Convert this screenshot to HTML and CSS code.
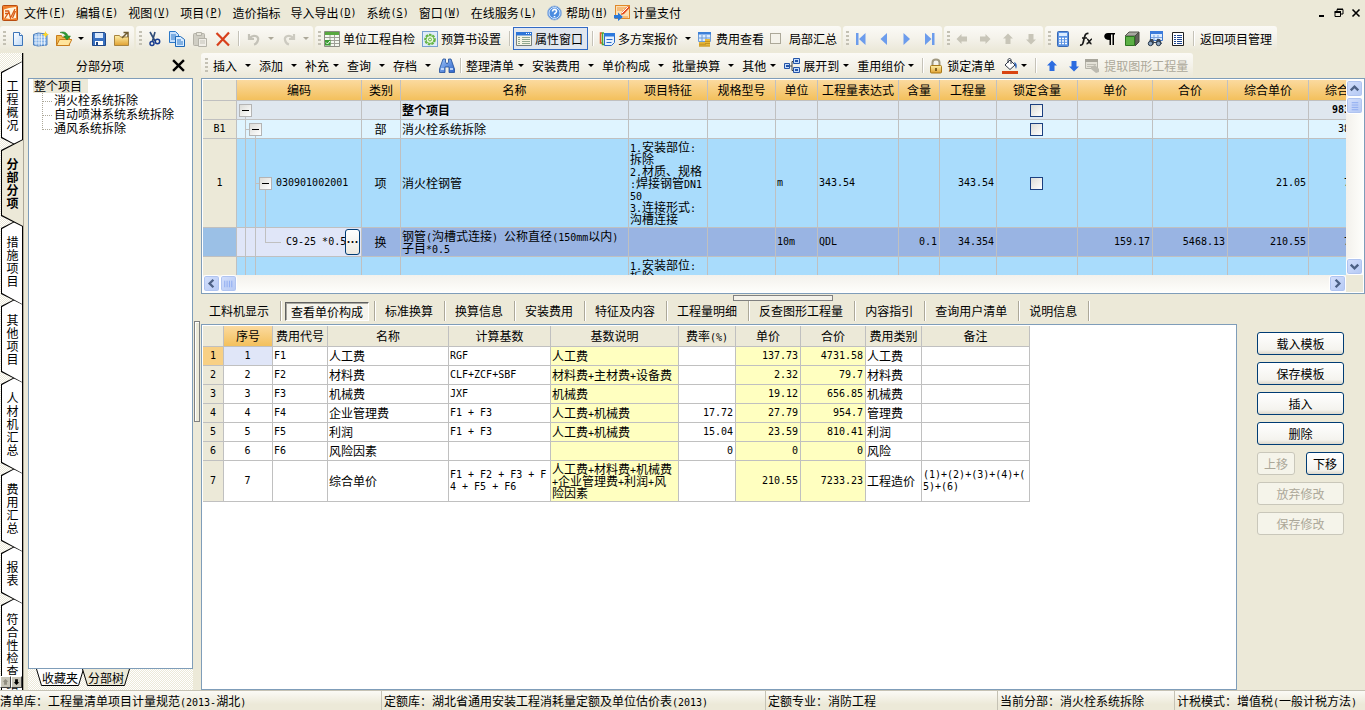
FILE: index.html
```
<!DOCTYPE html>
<html lang="zh-CN">
<head>
<meta charset="utf-8">
<title>分部分项 - 工程计价</title>
<link rel="stylesheet" href="styles.css">
</head>
<body>
<svg class="defs" aria-hidden="true">
  <defs>
    <linearGradient id="blue" x1="0" y1="0" x2="1" y2="1"><stop offset="0" stop-color="#9cc4f8"/><stop offset="1" stop-color="#2c62c8"/></linearGradient>
    <linearGradient id="page" x1="0" y1="0" x2="1" y2="1"><stop offset="0" stop-color="#fff"/><stop offset="1" stop-color="#bcd8f8"/></linearGradient>
    <linearGradient id="gold" x1="0" y1="0" x2="0" y2="1"><stop offset="0" stop-color="#fff0a8"/><stop offset="1" stop-color="#e0a030"/></linearGradient>
    <symbol id="arrow" viewBox="0 0 16 16"><path d="M8 2.500 13 7.500H10.500V13H5.500V7.500H3z"/></symbol>
  </defs>
</svg>

<header class="menubar">
  <nav class="menu">
    <svg class="ic app" viewBox="0 0 16 16"><rect x=".5" y=".5" width="15" height="15" rx="1" fill="#f0802c" stroke="#b84c10"/><path d="M2 4.500 7 3l7-1v11l-6 1-6-1z" fill="#fff4dc"/><path d="M3 6h4M3 8.500h3M3 13l4-6 1.500 6L13 4M10.500 13l3-7" stroke="#d85a14" stroke-width="1.300" fill="none"/></svg>
    <a href="#">文件<span class="n">(<u>F</u>)</span></a>
    <a href="#">编辑<span class="n">(<u>E</u>)</span></a>
    <a href="#">视图<span class="n">(<u>V</u>)</span></a>
    <a href="#">项目<span class="n">(<u>P</u>)</span></a>
    <a href="#">造价指标</a>
    <a href="#">导入导出<span class="n">(<u>D</u>)</span></a>
    <a href="#">系统<span class="n">(<u>S</u>)</span></a>
    <a href="#">窗口<span class="n">(<u>W</u>)</span></a>
    <a href="#">在线服务<span class="n">(<u>L</u>)</span></a>
    <a href="#"><svg class="ic" viewBox="0 0 16 16"><circle cx="7.500" cy="8" r="7" fill="#4c8ce0" stroke="#a0b8d8"/><circle cx="7.500" cy="8" r="5.500" fill="none" stroke="#d8e8fc"/><path d="M5.500 6.500C5.500 3.500 9.800 3.800 9.500 6.500 9.300 8 7.500 8 7.500 9.500M7.500 11v1.300" stroke="#fff" stroke-width="1.600" fill="none"/></svg>帮助<span class="n">(<u>H</u>)</span></a>
    <a href="#" class="pay"><svg class="ic" viewBox="0 0 16 16"><rect x="1.500" y=".5" width="14" height="13" fill="#fbe0b4" stroke="#e08828"/><path d="M3 3h9M3 5h6M9 12h5" stroke="#f09840"/><path d="m7 10 1-3 6-6 2 1.500-6 6.500z" fill="#e44c20"/><path d="m8 8 6-6" stroke="#fff"/><path d="M0 10h4V7.500L9 12l-5 4v-2.500H0z" fill="#2878d8"/></svg>计量支付</a>
  </nav>
  <div class="winctl">
    <button aria-label="最小化"><svg viewBox="0 0 10 10"><path d="M2 8h5" stroke="#000" stroke-width="2"/></svg></button>
    <button aria-label="还原"><svg viewBox="0 0 10 10"><path d="M3 3V1.500h6V6H7M3 1h6" stroke="#000" fill="none"/><path d="M1 4.500h5.500v4H1z" stroke="#000" fill="none"/><path d="M.5 4h6.500" stroke="#000" stroke-width="2"/></svg></button>
    <button aria-label="关闭"><svg viewBox="0 0 10 10"><path d="m1.500 1.500 7 7m0-7-7 7" stroke="#000" stroke-width="1.600"/></svg></button>
  </div>
</header>

<div class="toolbar first" role="toolbar" aria-label="标准">
  <div class="group">
    <i class="grip"></i>
    <button class="tb" aria-label="新建"><svg class="ic" viewBox="0 0 16 16"><path d="M3.500 1.500h6l3 3v10h-9z" fill="url(#page)" stroke="#3c74b8"/><path d="M9.500 1.500v3h3" fill="#fff" stroke="#3c74b8"/></svg></button>
    <button class="tb" aria-label="新建单位工程"><svg class="ic" viewBox="0 0 16 16"><path d="M.5 3.500 5 2l9 1v11l-9 1-4.500-1z" fill="#88b4e8" stroke="#5080bc"/><path d="M3 3v11.500M6 2.500V15M8.500 3v11.500M11.500 3v11.500M1 6h12M1 9h12M1 12h12" stroke="#fff" stroke-width=".7"/><path d="m12.500 0 1 2.500L16 3.500l-2.500 1-1 2.500-1-2.500L9 3.500l2.500-1z" fill="#ffd828"/></svg></button>
    <button class="tb" aria-label="打开"><svg class="ic" viewBox="0 0 16 16"><path d="M.5 14.500v-10h5l1 2h7v8z" fill="#f0b850" stroke="#c87c1c"/><path d="m.5 14.500 3-6h12.300l-3 6z" fill="#ffe49c" stroke="#c87c1c"/><path d="M4 1.500c4-1.500 7 0 8 3.500h2.500L11 9 7.500 5H10c-1-2-3-3-6-3.500z" fill="#2c9c30" stroke="#1c7420" stroke-width=".5"/></svg></button>
    <i class="caret"></i>
    <button class="tb" aria-label="保存"><svg class="ic" viewBox="0 0 16 16"><path d="M1.500 1.500h12l1 1v12h-13z" fill="#3870c0" stroke="#204888"/><path d="M4 2h8v5H4z" fill="#dceafc"/><path d="M4 10h8v4H4z" fill="#fff"/><path d="M5 11h2v3H5z" fill="#204888"/></svg></button>
    <button class="tb" aria-label="另存"><svg class="ic" viewBox="0 0 16 16"><path d="M.5 14.500v-10h5l1 1.500h8v8.500z" fill="url(#gold)" stroke="#a88440"/><path d="m8 7 5-5M9.500 1.500H14V6" stroke="#705c30" stroke-width="1.500" fill="none"/></svg></button>
  </div>
  <div class="group">
    <i class="grip"></i>
    <button class="tb" aria-label="剪切"><svg class="ic" viewBox="0 0 16 16"><path d="m4 1 5 9M9 1 6.500 10" stroke="#304c78" stroke-width="1.600"/><circle cx="6" cy="12.500" r="2" fill="none" stroke="#183c90" stroke-width="1.500"/><circle cx="11.500" cy="10.500" r="2.200" fill="none" stroke="#183c90" stroke-width="1.500"/></svg></button>
    <button class="tb" aria-label="复制"><svg class="ic" viewBox="0 0 16 16"><path d="M.5.5h6l3 3v8h-9z" fill="#c8e0fc" stroke="#2c78c8"/><path d="M2 4h5M2 6h5M2 8h5" stroke="#2c78c8"/><path d="M6.500 5.500h5l4 3v7h-9z" fill="#d8ebff" stroke="#1c68b8"/><path d="M8 9h4M8 11h6M8 13h6" stroke="#2c78c8"/></svg></button>
    <button class="tb" aria-label="粘贴" disabled><svg class="ic" viewBox="0 0 16 16"><rect x="1.500" y="2.500" width="11" height="12" rx="1" fill="#d0cec4" stroke="#b4b2a8"/><path d="M4.500 1.500h5v3h-5z" fill="#e8e6dc" stroke="#b4b2a8"/><path d="M6.500 7.500h8v8h-8z" fill="#f0eee8" stroke="#b4b2a8"/><path d="M8 10h5M8 12h5" stroke="#c4c2b8"/></svg></button>
    <button class="tb" aria-label="删除"><svg class="ic" viewBox="0 0 16 16"><path d="M1.500 2 14 14.500M14 1.500 2 14.500" stroke="#d8401c" stroke-width="2.200"/></svg></button>
    <i class="sep"></i>
    <button class="tb" aria-label="撤销" disabled><svg class="ic" viewBox="0 0 16 16"><path d="M3 3v5h5M4 7C7 3 13 5 12 9c-.5 2.500-2 4-4 4.500" stroke="#c4c2b8" stroke-width="2.200" fill="none"/></svg></button>
    <i class="caret off"></i>
    <button class="tb" aria-label="重做" disabled><svg class="ic" viewBox="0 0 16 16"><path d="M13 3v5H8M12 7C9 3 3 5 4 9c.5 2.500 2 4 4 4.500" stroke="#cccac0" stroke-width="2.200" fill="none"/></svg></button>
    <i class="caret off"></i>
  </div>
  <div class="group">
    <i class="grip"></i>
    <button class="tx"><svg class="ic" viewBox="0 0 16 16"><path d="M.5.5h15v15H.5z" fill="#f4f8f0" stroke="#8c8c84"/><path d="M1 1h14v3H1z" fill="#58a840"/><path d="M1 6.500h14M1 9.500h14M1 12.500h14M6 4v11M10.500 4v11" stroke="#a0a098"/><path d="M1 9h5.500v5.500H1z" fill="#3c9c34"/><path d="m2 11.500 1.500 1.500L6 10" stroke="#fff" fill="none"/></svg>单位工程自检</button>
    <button class="tx"><svg class="ic" viewBox="0 0 16 16"><rect x=".5" y=".5" width="15" height="15" fill="#e0ecfa" stroke="#78a0d0"/><circle cx="8" cy="8.500" r="4.800" fill="none" stroke="#64b440" stroke-width="2" stroke-dasharray="2.500 1"/><circle cx="8" cy="8.500" r="4" fill="#e8f8e0" stroke="#64b440"/><circle cx="8" cy="8.500" r="1.500" fill="none" stroke="#64b440"/></svg>预算书设置</button>
    <i class="sep"></i>
    <button class="tx on"><svg class="ic" viewBox="0 0 16 16"><path d="M.5 1.500h15v13H.5z" fill="#f6f4e4" stroke="#78807c"/><path d="M0 1h16v3.500H0z" fill="#2c74d8"/><path d="M10 2.500h5" stroke="#fff" stroke-dasharray="1 1"/><path d="M2 6.500h2M6 6.500h8M2 8.500h2M6 8.500h8M2 10.500h2M6 10.500h8M2 12.500h2M6 12.500h8" stroke="#90a890"/></svg>属性窗口</button>
    <i class="sep"></i>
    <button class="tx"><svg class="ic" viewBox="0 0 16 16"><path d="M3 2H1.500v10H3" fill="none" stroke="#e05c28" stroke-width="1.500"/><path d="M5 2H3.500v11.500H5" fill="none" stroke="#48a838" stroke-width="1.500"/><path d="M5.500 2.500h10v9l-3 3h-7z" fill="#e4f0ff" stroke="#2c6cc8"/><path d="M5 2h11v3.500H5z" fill="#2c78dc"/><path d="M7.500 8.500h6M7.500 11.500h5" stroke="#2c6cc8"/></svg>多方案报价</button>
    <i class="caret"></i>
    <button class="tx"><svg class="ic" viewBox="0 0 16 16"><path d="M1.500 1.500h12v9h-12z" fill="#dcecff" stroke="#6c9cd8"/><path d="M1 1h13v2.500H1z" fill="#3c80d8"/><path d="M5 4v7M9 4v7M2 7h11" stroke="#6c9cd8"/><path d="M2 11h7v4.500H2zM8 8h5v7.500H8z" fill="#e8b83c"/><path d="M2 13.200h7M8 10.500h5M8 12.500h5M2 15h11" stroke="#b88818" stroke-width=".8"/></svg>费用查看</button>
    <label class="chk"><input type="checkbox">局部汇总</label>
  </div>
  <div class="group">
    <i class="grip"></i>
    <button class="tb" aria-label="首个"><svg class="ic" viewBox="0 0 16 16"><path d="M3 2h2.500v12H3zM12.500 2v12L6 8z" fill="#6c9cec"/></svg></button>
    <button class="tb" aria-label="上一个"><svg class="ic" viewBox="0 0 16 16"><path d="M11 2v12L4.500 8z" fill="#6c9cec"/></svg></button>
    <button class="tb" aria-label="下一个"><svg class="ic" viewBox="0 0 16 16"><path d="M4.500 2v12L11 8z" fill="#6c9cec"/></svg></button>
    <button class="tb" aria-label="末个"><svg class="ic" viewBox="0 0 16 16"><path d="M10 2h2.500v12H10zM3 2v12l6.500-6z" fill="#6c9cec"/></svg></button>
  </div>
  <div class="group">
    <i class="grip"></i>
    <button class="tb left off" aria-label="左移" disabled><svg class="ic"><use href="#arrow"/></svg></button>
    <button class="tb right off" aria-label="右移" disabled><svg class="ic"><use href="#arrow"/></svg></button>
    <button class="tb off" aria-label="上移行" disabled><svg class="ic"><use href="#arrow"/></svg></button>
    <button class="tb down off" aria-label="下移行" disabled><svg class="ic"><use href="#arrow"/></svg></button>
  </div>
  <div class="group">
    <i class="grip"></i>
    <button class="tb" aria-label="计算器"><svg class="ic" viewBox="0 0 16 16"><rect x="2.500" y=".5" width="11" height="15" rx="1" fill="#5c94e4" stroke="#3868b4"/><path d="M4 2h8v3H4z" fill="#dcecff"/><path d="M4 7.500h8M4 10h8M4 12.500h8" stroke="#fff" stroke-width="1.500" stroke-dasharray="2 1"/></svg></button>
    <button class="tb" aria-label="函数"><svg class="ic" viewBox="0 0 16 16"><path d="M2 14c3 .5 3-2 4-6s1.500-6 4.500-5.500M4 7h5M9 8c2 0 2 5 4.500 4.500M14 8c-2 0-3 5-5.500 4.500" stroke="#181818" stroke-width="1.700" fill="none"/></svg></button>
    <button class="tb" aria-label="段落标记"><svg class="ic" viewBox="0 0 16 16"><path d="M7 2h7v1.500h-1V14h-1.500V3.500H10V14H8.500V9C1.500 9 2 2 7 2z"/></svg></button>
    <button class="tb" aria-label="图形"><svg class="ic" viewBox="0 0 16 16"><path d="m1 5 4-4h10l-4 4z" fill="#a8a8a0" stroke="#585850"/><path d="m11 5 4-4v10l-4 4z" fill="#606058" stroke="#484840"/><path d="M1.500 5.500h9v9h-9z" fill="#5cb044" stroke="#2c7420"/></svg></button>
    <button class="tb" aria-label="查找表"><svg class="ic" viewBox="0 0 16 16"><path d="M3.500.5h12v9h-12z" fill="#dcecff" stroke="#3c78d0"/><path d="M3 0h13v3H3z" fill="#3c7cdc"/><path d="M7 4v6M11 4v6M4 6.500h11" stroke="#7ca4e0"/><path d="m3 8 3 0 1 3h2l1-3h3l2 5h-5l-1-1H7l-1 2H1z" fill="#3c4858"/><circle cx="3.500" cy="12.500" r="2.200" fill="#90a8c4" stroke="#283848"/><circle cx="11.500" cy="12.500" r="2.200" fill="#90a8c4" stroke="#283848"/></svg></button>
    <button class="tb" aria-label="清单"><svg class="ic" viewBox="0 0 16 16"><path d="M2.500 1.500h11v13h-11z" fill="#fff" stroke="#202020"/><path d="M4 4.500h2M7 4.500h5M4 6.500h2M7 6.500h5M4 8.500h2M7 8.500h5M4 10.500h2M7 10.500h5M4 12.500h2M7 12.500h5" stroke="#204890"/></svg></button>
    <i class="sep"></i>
    <button class="tx">返回项目管理</button>
  </div>
</div>

<div class="work">
  <div class="rail" role="tablist" aria-label="页面">
    <button class="rt" role="tab"><span>工程概况</span></button>
    <button class="rt cur" role="tab" aria-selected="true"><span>分部分项</span></button>
    <button class="rt z6" role="tab"><span>措施项目</span></button>
    <button class="rt z5" role="tab"><span>其他项目</span></button>
    <button class="rt z4" role="tab"><span>人材机汇总</span></button>
    <button class="rt z3" role="tab"><span>费用汇总</span></button>
    <button class="rt z2" role="tab"><span>报表</span></button>
    <button class="rt z1" role="tab"><span>符合性检查结果</span></button>
    <div class="railscroll">
      <button aria-label="向上滚动" disabled><svg viewBox="0 0 16 16"><use href="#arrow"/></svg></button>
      <button aria-label="向下滚动"><svg class="flip" viewBox="0 0 16 16"><use href="#arrow"/></svg></button>
    </div>
  </div>

  <aside class="side">
    <div class="sidehead"><h2>分部分项</h2><button aria-label="关闭面板"><svg viewBox="0 0 12 12"><path d="m1 1 10 10M11 1 1 11" stroke="#000" stroke-width="2.200"/></svg></button></div>
    <ul class="tree">
      <li><span class="sel">整个项目</span>
        <ul><li>消火栓系统拆除</li><li>自动喷淋系统系统拆除</li><li>通风系统拆除</li></ul>
      </li>
    </ul>
    <div class="sidetabs">
      <button><svg viewBox="0 0 48 17" preserveAspectRatio="none"><path d="m.5 0 5 16.500h37L47.500 0" fill="#fff" stroke="#000"/></svg><span>收藏夹</span></button>
      <button><svg viewBox="0 0 48 17" preserveAspectRatio="none"><path d="m.5 0 5 16.500h37L47.500 0" fill="#ece9d8" stroke="#000"/></svg><span>分部树</span></button>
    </div>
  </aside>

  <div class="vsplit"><i></i></div>

  <main class="content">
    <div class="toolbar second" role="toolbar" aria-label="清单">
      <div class="group">
        <i class="grip"></i>
        <button class="tx">插入</button><i class="caret split"></i>
        <button class="tx">添加</button><i class="caret split"></i>
        <button class="tx">补充</button><i class="caret near"></i>
        <button class="tx">查询</button><i class="caret split"></i>
        <button class="tx">存档</button><i class="caret split"></i>
        <button class="tx" aria-label="查找"><svg class="ic" viewBox="0 0 16 16"><path d="M4 1h2.500v3L8 6l1.500-2V1H12l3.500 10v3.500h-5.500V9H6v5.500H.5V11z" fill="url(#blue)" stroke="#204c98" stroke-width=".8"/><path d="M2 11h3M11 11h3" stroke="#dcecff" stroke-width="1.500"/></svg></button>
        <i class="sep"></i>
        <button class="tx">整理清单</button><i class="caret near"></i>
        <button class="tx">安装费用</button><i class="caret split"></i>
        <button class="tx">单价构成</button><i class="caret split"></i>
        <button class="tx">批量换算</button><i class="caret split"></i>
        <button class="tx">其他</button><i class="caret near"></i>
        <button class="tx"><svg class="ic" viewBox="0 0 16 16"><path d="M5 8h3M8 3.500v9M8 3.500h2M8 12.500h2" stroke="#404040" fill="none"/><path d="M.5 5.500h5v5h-5zM9.500.5h6v5h-6zM9.500 9.500h6v5h-6z" fill="#c4dcfc" stroke="#2454a8"/><path d="M2 8h3M11 3h3M11 12h3" stroke="#2454a8" stroke-width="2"/></svg>展开到</button><i class="caret near"></i>
        <button class="tx">重用组价</button><i class="caret"></i>
        <i class="sep"></i>
        <button class="tx"><svg class="ic" viewBox="0 0 16 16"><path d="M4.500 8V4.500c0-4 7-4 7 0V8" stroke="#a09880" stroke-width="2" fill="none"/><rect x="2.500" y="7.500" width="11" height="7.500" rx="1" fill="url(#gold)" stroke="#a87818"/><path d="M8 10v3" stroke="#604008" stroke-width="1.500"/></svg>锁定清单</button>
        <button class="tx fill" aria-label="填充颜色"><svg class="ic" viewBox="0 0 16 16"><path d="m3 7 5-5 5 5-5 4.500z" fill="#fff" stroke="#303848"/><path d="M6 5V2c0-2 3-2 3 0v4" stroke="#303848" fill="none"/><path d="M12 4c3 1 3.500 4 2 7-1-2-1-4-2-7z" fill="#3468b8"/><path d="M0 13h16v3H0z" fill="#d84410"/></svg></button><i class="caret"></i>
        <i class="sep"></i>
        <button class="tb blue" aria-label="上移"><svg class="ic"><use href="#arrow"/></svg></button>
        <button class="tb down blue" aria-label="下移"><svg class="ic"><use href="#arrow"/></svg></button>
        <button class="tx" disabled><svg class="ic" viewBox="0 0 16 16"><path d="M.5 1.500h12v9H.5z" fill="#e4e2d8" stroke="#b4b2a8"/><path d="M0 1h13v3H0z" fill="#a8a69c"/><path d="M2 6.500h9M2 8.500h6" stroke="#c0beb4"/><path d="m6 9 4-2 4 4v3l-3 1-5-4z" fill="#bcbab0"/></svg>提取图形工程量</button>
      </div>
    </div>

    <section class="frame upper">
      <div class="view">
        <table class="grid main">
          <colgroup><col class="w34"><col class="w125"><col class="w39"><col class="w228"><col class="w79"><col class="w68"><col class="w42"><col class="w81"><col class="w41"><col class="w57"><col class="w81"><col class="w75"><col class="w75"><col class="w81"><col class="w44"></colgroup>
          <thead><tr><th class="rh"></th><th>编码</th><th>类别</th><th>名称</th><th>项目特征</th><th>规格型号</th><th>单位</th><th>工程量表达式</th><th>含量</th><th>工程量</th><th>锁定含量</th><th>单价</th><th>合价</th><th>综合单价</th><th class="cut">综合合</th></tr></thead>
          <tbody>
            <tr class="r1"><th class="rh"></th><td class="code"><div class="lv l1"><button class="exp" aria-label="折叠"></button></div></td><td></td><td class="b">整个项目</td><td></td><td></td><td></td><td></td><td></td><td></td><td class="c"><input type="checkbox" aria-label="锁定含量"></td><td></td><td></td><td></td><td class="num b">983</td></tr>
            <tr class="r2"><th class="rh n">B1</th><td class="code"><div class="lv l2"><button class="exp" aria-label="折叠"></button></div></td><td class="c">部</td><td>消火栓系统拆除</td><td></td><td></td><td></td><td></td><td></td><td></td><td class="c"><input type="checkbox" aria-label="锁定含量"></td><td></td><td></td><td></td><td class="num">38</td></tr>
            <tr class="r3"><th class="rh n">1</th><td class="code"><div class="lv l3"><button class="exp" aria-label="折叠"></button><span class="n">030901002001</span></div></td><td class="c">项</td><td>消火栓钢管</td><td><span class="n">1.</span>安装部位<span class="n">:</span><br>拆除<br><span class="n">2.</span>材质、规格<br><span class="n">:</span>焊接钢管<span class="n">DN1</span><br><span class="n">50</span><br><span class="n">3.</span>连接形式<span class="n">:</span><br>沟槽连接</td><td></td><td class="n">m</td><td class="n">343.54</td><td></td><td class="num">343.54</td><td class="c"><input type="checkbox" aria-label="锁定含量"></td><td></td><td></td><td class="num">21.05</td><td class="num">7</td></tr>
            <tr class="r4"><th class="rh"></th><td class="code"><div class="lv l4"><span class="n">C9-25 *0.5</span><button class="more" aria-label="选择">…</button></div></td><td class="c">换</td><td>钢管<span class="n">(</span>沟槽式连接<span class="n">) </span>公称直径<span class="n">(150mm</span>以内<span class="n">)</span><br>子目<span class="n">*0.5</span></td><td></td><td></td><td class="n">10m</td><td class="n">QDL</td><td class="num">0.1</td><td class="num">34.354</td><td></td><td class="num">159.17</td><td class="num">5468.13</td><td class="num">210.55</td><td class="num">7</td></tr>
            <tr class="r3"><th class="rh"></th><td class="code"><div class="lv l5"></div></td><td></td><td></td><td><span class="n">1.</span>安装部位<span class="n">:</span><br>拆除<br><span class="n">2.</span>材质、规格<br><span class="n">:</span>焊接钢管<br><span class="n">3.</span>连接形式<span class="n">:</span><br>沟槽连接<br>&nbsp;</td><td></td><td></td><td></td><td></td><td></td><td></td><td></td><td></td><td></td><td></td></tr>
          </tbody>
        </table>
      </div>
      <div class="sb v">
        <button aria-label="向上"><svg viewBox="0 0 16 16"><path d="m4 10 4-4 4 4"/></svg></button>
        <button class="thumb" aria-label="垂直滑块"><svg viewBox="0 0 16 16"><path d="M5 5h7M5 7.500h7M5 10h7M5 12.500h7"/></svg></button>
        <i></i>
        <button aria-label="向下"><svg viewBox="0 0 16 16"><path d="m4 6 4 4 4-4"/></svg></button>
      </div>
      <div class="sb h">
        <button aria-label="向左"><svg viewBox="0 0 16 16"><path d="M10 4 6 8l4 4"/></svg></button>
        <button class="thumb" aria-label="水平滑块"><svg viewBox="0 0 16 16"><path d="M4 5v7M6.500 5v7M9 5v7M11.500 5v7"/></svg></button>
        <i></i>
        <button aria-label="向右"><svg viewBox="0 0 16 16"><path d="m6 4 4 4-4 4"/></svg></button>
      </div>
      <div class="corner"></div>
    </section>

    <div class="hsplit"><i></i></div>

    <div class="tabs" role="tablist">
      <button role="tab">工料机显示</button><button role="tab" class="cur" aria-selected="true"><span>查看单价构成</span></button><button role="tab">标准换算</button><button role="tab">换算信息</button><button role="tab">安装费用</button><button role="tab">特征及内容</button><button role="tab">工程量明细</button><button role="tab">反查图形工程量</button><button role="tab">内容指引</button><button role="tab">查询用户清单</button><button role="tab">说明信息</button>
    </div>

    <div class="lower">
      <section class="frame detail">
        <table class="grid sub">
          <colgroup><col class="w21"><col class="w49"><col class="w55"><col class="w121"><col class="w102"><col class="w128"><col class="w57"><col class="w65"><col class="w65"><col class="w56"><col class="w108"></colgroup>
          <thead><tr><th></th><th class="hot">序号</th><th>费用代号</th><th>名称</th><th>计算基数</th><th>基数说明</th><th>费率<span class="n">(%)</span></th><th>单价</th><th>合价</th><th>费用类别</th><th>备注</th></tr></thead>
          <tbody>
            <tr><th class="n hot">1</th><td class="n c pick">1</td><td class="n">F1</td><td>人工费</td><td class="n">RGF</td><td class="y">人工费</td><td></td><td class="num y">137.73</td><td class="num y">4731.58</td><td>人工费</td><td></td></tr>
            <tr><th class="n">2</th><td class="n c">2</td><td class="n">F2</td><td>材料费</td><td class="n">CLF+ZCF+SBF</td><td class="y">材料费<span class="n">+</span>主材费<span class="n">+</span>设备费</td><td></td><td class="num y">2.32</td><td class="num y">79.7</td><td>材料费</td><td></td></tr>
            <tr><th class="n">3</th><td class="n c">3</td><td class="n">F3</td><td>机械费</td><td class="n">JXF</td><td class="y">机械费</td><td></td><td class="num y">19.12</td><td class="num y">656.85</td><td>机械费</td><td></td></tr>
            <tr><th class="n">4</th><td class="n c">4</td><td class="n">F4</td><td>企业管理费</td><td class="n">F1 + F3</td><td class="y">人工费<span class="n">+</span>机械费</td><td class="num">17.72</td><td class="num y">27.79</td><td class="num y">954.7</td><td>管理费</td><td></td></tr>
            <tr><th class="n">5</th><td class="n c">5</td><td class="n">F5</td><td>利润</td><td class="n">F1 + F3</td><td class="y">人工费<span class="n">+</span>机械费</td><td class="num">15.04</td><td class="num y">23.59</td><td class="num y">810.41</td><td>利润</td><td></td></tr>
            <tr><th class="n">6</th><td class="n c">6</td><td class="n">F6</td><td>风险因素</td><td></td><td class="y"></td><td class="num">0</td><td class="num y">0</td><td class="num y">0</td><td>风险</td><td></td></tr>
            <tr class="tall"><th class="n">7</th><td class="n c">7</td><td></td><td>综合单价</td><td class="n">F1 + F2 + F3 + F<br>4 + F5 + F6</td><td class="y">人工费<span class="n">+</span>材料费<span class="n">+</span>机械费<br><span class="n">+</span>企业管理费<span class="n">+</span>利润<span class="n">+</span>风<br>险因素</td><td></td><td class="num y">210.55</td><td class="num y">7233.23</td><td>工程造价</td><td class="n">(1)+(2)+(3)+(4)+(<br>5)+(6)</td></tr>
          </tbody>
        </table>
      </section>
      <div class="actions">
        <button>载入模板</button>
        <button>保存模板</button>
        <button>插入</button>
        <button>删除</button>
        <div class="pair"><button disabled>上移</button><button>下移</button></div>
        <button disabled>放弃修改</button>
        <button disabled>保存修改</button>
      </div>
    </div>
  </main>
</div>

<footer class="status">
  <span>清单库：工程量清单项目计量规范<span class="n">(2013-</span>湖北<span class="n">)</span></span>
  <span>定额库：湖北省通用安装工程消耗量定额及单位估价表<span class="n">(2013)</span></span>
  <span>定额专业：消防工程</span>
  <span>当前分部：消火栓系统拆除</span>
  <span>计税模式：增值税<span class="n">(</span>一般计税方法<span class="n">)</span></span>
</footer>
</body>
</html>
```
FILE: styles.css
```
* { box-sizing: border-box; }
html, body { height: 100%; }
body {
  margin: 0;
  display: flex;
  flex-direction: column;
  overflow: hidden;
  background: #ece9d8;
  color: #000;
  font: 12px/14px "Noto Sans CJK SC", "Liberation Sans", sans-serif;
}
button {
  margin: 0;
  padding: 0;
  border: 0;
  background: none;
  color: inherit;
  font: inherit;
  white-space: nowrap;
}
button:disabled { color: #aca899; }
input { margin: 0; }
i { font-style: normal; flex: none; }
svg { display: block; flex: none; }
.defs { position: absolute; width: 0; height: 0; }
.ic { width: 16px; height: 16px; }
.n, .num { font-family: "DejaVu Sans Mono", "Liberation Mono", monospace; font-size: 10px; }
span.n { line-height: 0; white-space: pre; }

/* menu bar */
.menubar { flex: none; display: flex; justify-content: space-between; height: 26px; padding: 0 4px 0 2px; }
.menu { display: flex; align-items: center; gap: 10px; }
.menu a { display: flex; align-items: center; color: inherit; text-decoration: none; }
.menu a > .ic { margin-right: 3px; }
.menu a.pay { margin-left: -4px; }
.menu .app { margin-right: -4px; }
.winctl { display: flex; align-items: center; gap: 7px; }
.winctl svg { width: 10px; height: 10px; }

/* tool bars */
.toolbar { flex: none; display: flex; height: 27px; gap: 2px; }
.toolbar.second { height: 25px; }
.group {
  display: flex;
  align-items: center;
  height: 25px;
  padding: 0 1px 0 3px;
  border-radius: 3px;
  background: linear-gradient(#fbfaf6, #f4f2ea 50%, #ebe8d8);
  white-space: nowrap;
}
.second .group { padding: 0 5px 0 4px; }
.grip { width: 3px; height: 15px; background: repeating-linear-gradient(#c4c1b4 0 2px, transparent 2px 4px); }
.second .grip { margin-right: 5px; }
.tb { display: grid; place-items: center; width: 23px; height: 23px; }
.tx { display: flex; align-items: center; gap: 3px; height: 23px; }
.first .tx { padding: 0 4px 0 3px; }
.first .tx.on { padding-left: 2px; border: 1px solid #316ac5; background: #e1e6ee; }
.sep { width: 1px; height: 15px; margin: 0 3px 0 4px; background: #c5c2b8; box-shadow: 1px 0 #fff; }
.second .sep { margin: 0 5px; }
.caret { display: grid; place-items: center; width: 12px; height: 20px; }
.caret::before { content: ""; border: 3px solid transparent; border-top-color: #000; border-bottom: 0; }
.caret.off::before { border-top-color: #aca899; }
.caret.split { width: 22px; }
.caret.near { width: 18px; padding-right: 4px; }
.chk { display: flex; align-items: center; gap: 8px; padding: 0 3px 0 2px; }
.chk input { appearance: none; width: 11px; height: 11px; border: 1px solid #aca899; background: #f4f2ea; }
.tb .ic { fill: inherit; }
.off { fill: #c8c5b8; }
.blue { width: 22px; fill: #2c6ce0; }
.fill { padding-left: 7px; }
.left .ic { transform: rotate(-90deg); }
.right .ic { transform: rotate(90deg); }
.down .ic, .flip { transform: rotate(180deg); }

/* work area */
.work { flex: 1; min-height: 0; display: flex; }
.rail {
  position: relative;
  flex: none;
  display: flex;
  flex-direction: column;
  width: 24px;
  padding-top: 8px;
  overflow: hidden;
  border-right: 1px solid #aca899;
  background: conic-gradient(#fff 25%, #ece9d8 0 50%, #fff 0 75%, #ece9d8 0) 0 0 / 2px 2px;
  box-shadow: inset -1px 0 #000;
}
.rt {
  position: relative;
  z-index: 1;
  flex: none;
  width: 23px;
  margin-bottom: -10px;
  padding: 18px 4px 18px 6px;
  background: #000;
  clip-path: polygon(100% 0, 1px 11px, 1px calc(100% - 11px), 100% 100%);
  line-height: 13px;
  white-space: normal;
  word-break: break-all;
}
.rt::before {
  content: "";
  position: absolute;
  inset: 1px 1px 1px 0;
  background: #fff;
  clip-path: polygon(100% 0, 2px 11px, 2px calc(100% - 11px), 100% 100%);
}
.rt span { position: relative; display: block; width: 13px; }
.rt.cur { z-index: 9; font-weight: bold; }
.rt.cur::before { right: 0; background: #ece9d8; }
.z6 { z-index: 6; } .z5 { z-index: 5; } .z4 { z-index: 4; } .z3 { z-index: 3; } .z2 { z-index: 2; }
.z1 { z-index: 0; }
.railscroll { position: absolute; z-index: 10; left: 0; bottom: 2px; display: flex; }
.railscroll button { width: 11px; height: 12px; border: 1px solid #404040; border-color: #fff #404040 #404040 #fff; background: #c8c5b8; }
.railscroll svg { width: 9px; height: 10px; }
.railscroll button:disabled { fill: #908d80; }

.side { flex: none; display: flex; flex-direction: column; width: 169px; padding-left: 4px; }
.sidehead { flex: none; display: flex; align-items: center; height: 25px; padding-right: 8px; }
.sidehead h2 { flex: 1; margin: 0; font: inherit; text-align: center; }
.sidehead svg { width: 13px; height: 13px; }
.tree, .tree ul { margin: 0; padding: 0; list-style: none; }
.tree { flex: 1; padding: 0 4px; border: 1px solid #7f9db9; background: #fff; }
.sel { display: inline-block; padding: 0 6px 0 1px; background: #ece9d8; }
.tree ul { padding-left: 9px; }
.tree ul li { position: relative; padding-left: 12px; }
.tree ul li::before { content: ""; position: absolute; left: 0; top: 0; width: 9px; height: 8px; border: 1px dotted #aca899; border-width: 0 0 1px 1px; }
.tree ul li + li::before { top: -6px; height: 14px; }
.sidetabs {
  flex: none;
  display: flex;
  height: 21px;
  padding-left: 8px;
  background: conic-gradient(#fff 25%, #ece9d8 0 50%, #fff 0 75%, #ece9d8 0) 0 0 / 2px 2px;
}
.sidetabs button { position: relative; width: 48px; height: 17px; margin-right: -2px; }
.sidetabs svg { position: absolute; inset: 0; width: 100%; height: 100%; }
.sidetabs span { position: relative; }

.vsplit { flex: none; width: 8px; padding: 268px 1px 0; }
.vsplit i { display: block; height: 101px; border: 1px solid #808080; background: #ece9d8; box-shadow: inset 1px 1px #fff; }

/* content */
.content { flex: 1; min-width: 0; display: flex; flex-direction: column; }
.frame { border: 1px solid #7f9db9; background: #fff; }
.upper { flex: none; display: grid; grid-template: minmax(0, 1fr) 17px / minmax(0, 1fr) 17px; height: 216px; padding: 1px; }
.view { overflow: hidden; }
.grid { table-layout: fixed; border-spacing: 0; line-height: 12px; }
.grid.main { width: 1150px; }
.grid.sub { width: 827px; }
.grid th, .grid td {
  height: 19px;
  padding: 0 2px 0 1px;
  border: 1px solid #c0c0c0;
  border-width: 0 1px 1px 0;
  overflow: hidden;
  text-align: left;
  white-space: nowrap;
  font-weight: normal;
}
.grid th { padding: 0; background: #ece9d8; text-align: center; }
.grid thead th { height: 21px; }
.grid.main thead th:not(.rh), .grid .hot { background: linear-gradient(#fbda9f, #f3c05c); }
.grid tbody .hot { background: #f8d084; }
.grid thead th.cut { padding-left: 16px; text-align: left; }
.grid td.num { text-align: right; }
.grid td.c { text-align: center; }
.grid td.b { font-weight: bold; }
.grid .y { background: #ffffc0; }
.grid .pick { background: #e0e6f8; }
.grid .tall td { height: 41px; }
.w21 { width: 21px; } .w34 { width: 34px; } .w39 { width: 39px; } .w41 { width: 41px; }
.w42 { width: 42px; } .w44 { width: 44px; } .w49 { width: 49px; } .w55 { width: 55px; }
.w56 { width: 56px; } .w57 { width: 57px; } .w65 { width: 65px; } .w68 { width: 68px; }
.w75 { width: 75px; } .w79 { width: 79px; } .w81 { width: 81px; } .w102 { width: 102px; }
.w108 { width: 108px; } .w121 { width: 121px; } .w125 { width: 125px; } .w128 { width: 128px; }
.w228 { width: 228px; }
.r1 td { background: #dfe7ef; }
.r2 td { background: #dff4ff; }
.grid .r3 td { height: 89px; background: #a9dcfc; }
.grid .r4 td { height: 29px; background: #99b4e3; }
.grid .r4 .rh { background: #9bc0e6; }
.grid .r4 td.code { background: #e0e6f8; }
.grid td.code { padding: 0; }
.main input { appearance: none; display: block; width: 13px; height: 13px; margin: 0 auto; border: 1px solid #1c4080; background: linear-gradient(135deg, #dcdcd7, #fff); }

/* outline lines of the code column */
.lv { position: relative; display: flex; align-items: center; height: 18px; background-repeat: no-repeat; }
.r3 .lv { height: 88px; }
.r4 .lv { height: 28px; }
.l1 { padding-left: 2px; background-image: linear-gradient(#c0c0c0, #c0c0c0); background-size: 1px 50%; background-position: 8px 100%; }
.l2 { padding-left: 12px; background-image: linear-gradient(#c0c0c0, #c0c0c0), linear-gradient(#c0c0c0, #c0c0c0), linear-gradient(#c0c0c0, #c0c0c0); background-size: 1px 100%, 1px 50%, 8px 1px; background-position: 8px 0, 18px 100%, 8px 50%; }
.l3 { padding-left: 22px; background-image: linear-gradient(#c0c0c0, #c0c0c0), linear-gradient(#c0c0c0, #c0c0c0), linear-gradient(#c0c0c0, #c0c0c0), linear-gradient(#c0c0c0, #c0c0c0); background-size: 1px 100%, 1px 100%, 1px 50%, 8px 1px; background-position: 8px 0, 18px 0, 28px 100%, 18px 50%; }
.l4 { padding-left: 49px; background-image: linear-gradient(#c0c0c0, #c0c0c0), linear-gradient(#c0c0c0, #c0c0c0), linear-gradient(#c0c0c0, #c0c0c0), linear-gradient(#c0c0c0, #c0c0c0); background-size: 1px 100%, 1px 100%, 1px 50%, 16px 1px; background-position: 8px 0, 18px 0, 28px 0, 28px 50%; }
.l5 { background-image: linear-gradient(#c0c0c0, #c0c0c0), linear-gradient(#c0c0c0, #c0c0c0); background-size: 1px 100%; background-position: 8px 0, 18px 0; }
.exp { width: 13px; height: 13px; margin-right: 4px; border: 1px solid #b4b4b4; background: linear-gradient(#000, #000) center / 7px 1px no-repeat, linear-gradient(135deg, #dcdcd7, #fff); }
.more { position: absolute; right: 1px; top: 1px; width: 15px; height: 26px; border: 1px solid #003c74; border-radius: 3px; background: linear-gradient(#fff, #ece9e0); font-weight: bold; }

/* scroll bars */
.sb { display: flex; background: linear-gradient(90deg, #f3f1ec, #fefefb); }
.sb.v { flex-direction: column; }
.sb.h { background: linear-gradient(#f3f1ec, #fefefb); }
.sb i { flex: 1; }
.sb button { width: 17px; height: 17px; border: 1px solid #fff; border-radius: 3px; background: linear-gradient(135deg, #d4e0fc, #b4c8f4); box-shadow: inset 0 0 0 1px #b0c4f0; }
.sb svg { width: 15px; height: 15px; fill: none; stroke: #4d6185; stroke-width: 2.500; }
.sb .thumb svg { stroke: #8caaf0; stroke-width: 1; }
.corner { background: #ece9d8; }

.hsplit { flex: none; display: grid; place-items: center; height: 7px; }
.hsplit i { width: 100px; height: 6px; border: 1px solid #808080; background: #f4f2ea; }

.tabs { flex: none; display: flex; height: 23px; padding-bottom: 3px; }
.tabs button { padding: 0 11px 0 10px; border-right: 1px solid #aca899; box-shadow: 1px 0 #fff; }
.tabs button:first-child { padding-left: 8px; }
.tabs .cur { padding: 1px 5px 0 4px; }
.tabs .cur span { display: block; padding: 2px 5px 1px; border: 1px solid; border-color: #606060 #fff #fff #606060; background: #f6f4ec; box-shadow: inset 1px 1px #a8a8a0; }

.lower { flex: 1; min-height: 0; display: flex; }
.detail { flex: 1; padding: 1px; }
.actions { flex: none; display: flex; flex-direction: column; gap: 7px; width: 128px; padding: 8px 21px 0 20px; }
.actions button { height: 23px; border: 1px solid #003c74; border-radius: 3px; background: linear-gradient(#fff, #f4f3ee 80%, #dcd8cc); }
.actions button:disabled { border-color: #c9c7ba; background: #f5f4ea; }
.pair { display: flex; justify-content: space-between; }
.pair button { width: 38px; }

/* status bar */
.status { flex: none; display: grid; grid-template-columns: 382fr 384fr 232fr 177fr 190fr; height: 20px; border-top: 1px solid #c5c2b4; background: linear-gradient(#fbfaf6, #ece9d8 70%); line-height: 20px; white-space: nowrap; }
.status > span { padding-left: 2px; border-right: 1px solid #c5c2b4; }
.status > span:first-child { padding-left: 0; }
.status > span:last-child { border: 0; }
```
